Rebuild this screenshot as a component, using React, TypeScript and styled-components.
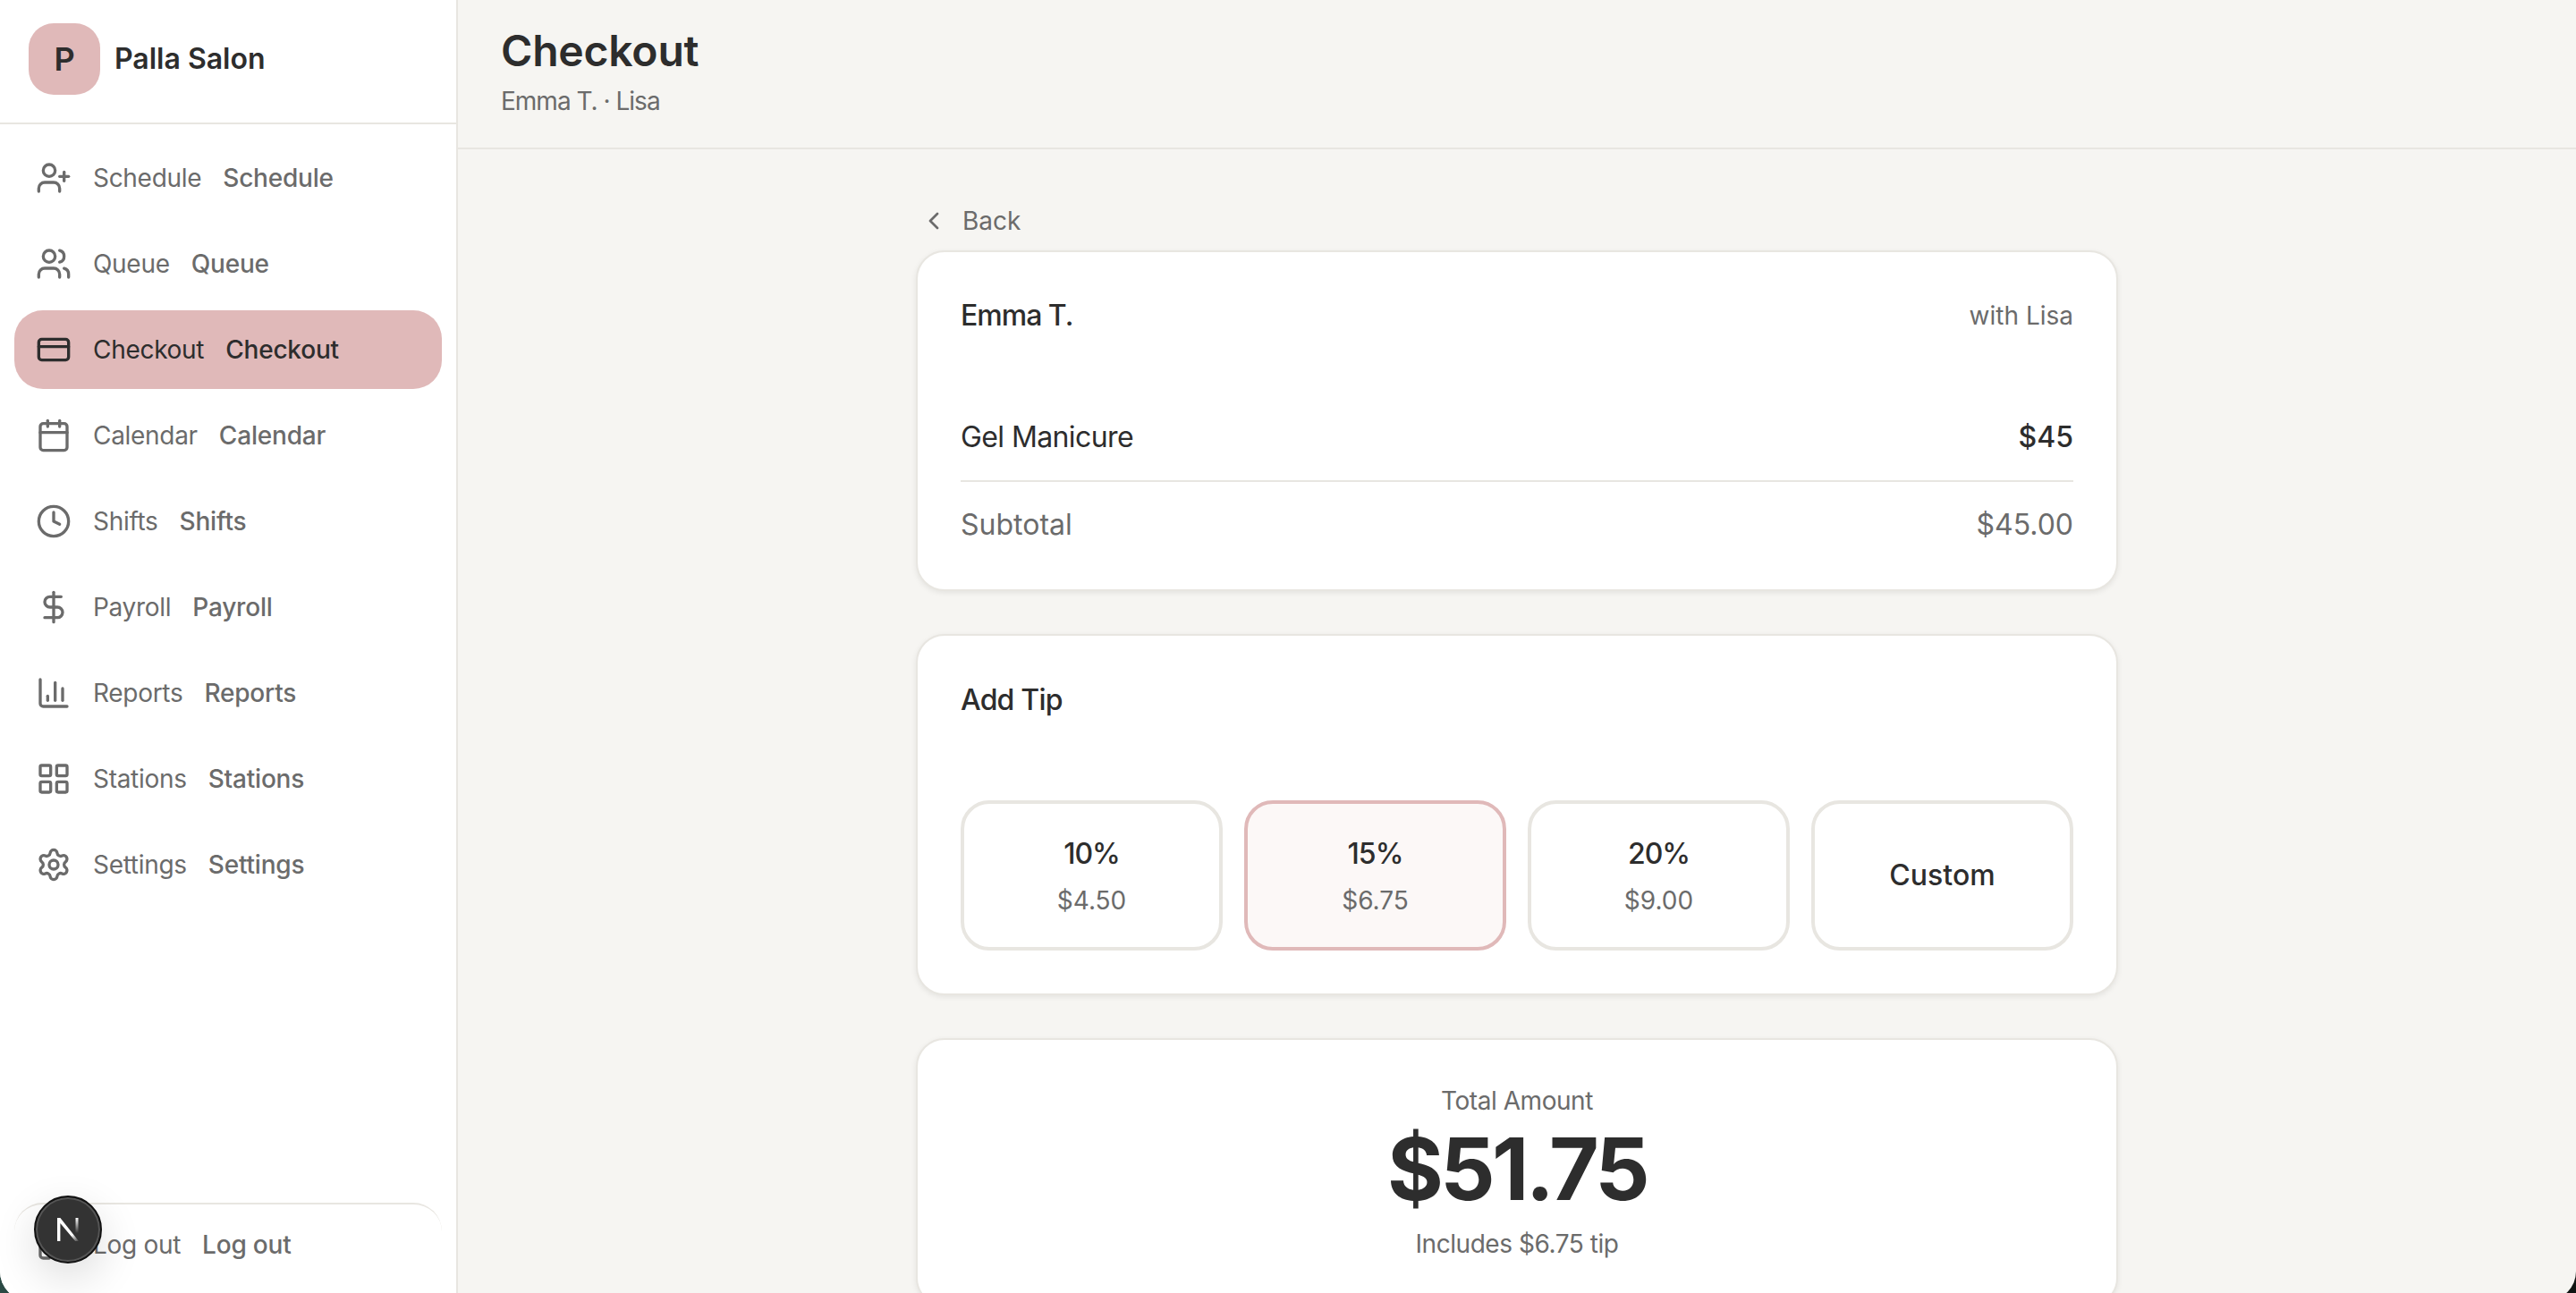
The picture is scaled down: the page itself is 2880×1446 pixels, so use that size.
import { createGlobalStyle, styled } from "styled-components";
import {
  BarChart3,
  Calendar,
  ChevronLeft,
  Clock,
  CreditCard,
  DollarSign,
  LayoutGrid,
  LogOut,
  Settings,
  UserPlus,
  Users,
} from "lucide-react";

const navItems = [
  { label: "Schedule", Icon: UserPlus },
  { label: "Queue", Icon: Users },
  { label: "Checkout", Icon: CreditCard, active: true },
  { label: "Calendar", Icon: Calendar },
  { label: "Shifts", Icon: Clock },
  { label: "Payroll", Icon: DollarSign },
  { label: "Reports", Icon: BarChart3 },
  { label: "Stations", Icon: LayoutGrid },
  { label: "Settings", Icon: Settings },
];

const tips = [
  { pct: "10%", amount: "$4.50" },
  { pct: "15%", amount: "$6.75", selected: true },
  { pct: "20%", amount: "$9.00" },
];

export default function App() {
  return (
    <>
      <GlobalStyle />
      <Frame>
        <Window>
          <Sidebar>
            <Brand>
              <Logo>P</Logo>
              <BrandName>Palla Salon</BrandName>
            </Brand>
            <Nav>
              {navItems.map(({ label, Icon, active }) => (
                <NavItem key={label} $active={active}>
                  <Icon size={40} strokeWidth={2} />
                  <NavLabel>{label}</NavLabel>
                  <NavLabelStrong>{label}</NavLabelStrong>
                </NavItem>
              ))}
            </Nav>
            <LogoutItem>
              <LogOut size={40} strokeWidth={2} />
              <NavLabel>Log out</NavLabel>
              <NavLabelStrong>Log out</NavLabelStrong>
            </LogoutItem>
            <DevBadge>
              <svg width="36" height="36" viewBox="0 0 36 36" fill="none">
                <defs>
                  <linearGradient id="nFade" x1="18" y1="14" x2="30" y2="32" gradientUnits="userSpaceOnUse">
                    <stop offset="0.5" stopColor="#fff" />
                    <stop offset="1" stopColor="#fff" stopOpacity="0" />
                  </linearGradient>
                  <linearGradient id="nBar" x1="28" y1="5" x2="28" y2="22" gradientUnits="userSpaceOnUse">
                    <stop stopColor="#fff" />
                    <stop offset="1" stopColor="#fff" stopOpacity="0" />
                  </linearGradient>
                </defs>
                <path d="M6 5h3.4L30 31h-3.8L9.4 11v20H6z" fill="url(#nFade)" />
                <rect x="26.5" y="5" width="3" height="17" fill="url(#nBar)" />
              </svg>
            </DevBadge>
          </Sidebar>
          <Main>
            <Header>
              <Title>Checkout</Title>
              <Subtitle>Emma T. · Lisa</Subtitle>
            </Header>
            <Content>
              <Column>
                <BackLink>
                  <ChevronLeft size={32} strokeWidth={2} />
                  <span>Back</span>
                </BackLink>
                <Card>
                  <SplitRow>
                    <ClientName>Emma T.</ClientName>
                    <Muted>with Lisa</Muted>
                  </SplitRow>
                  <ServiceRow>
                    <ServiceName>Gel Manicure</ServiceName>
                    <ServicePrice>$45</ServicePrice>
                  </ServiceRow>
                  <SubtotalRow>
                    <span>Subtotal</span>
                    <span>$45.00</span>
                  </SubtotalRow>
                </Card>
                <TipCard>
                  <TipHeading>Add Tip</TipHeading>
                  <TipGrid>
                    {tips.map((tip) => (
                      <TipButton key={tip.pct} $selected={tip.selected}>
                        <TipPct>{tip.pct}</TipPct>
                        <TipAmount>{tip.amount}</TipAmount>
                      </TipButton>
                    ))}
                    <TipButton>
                      <TipCustom>Custom</TipCustom>
                    </TipButton>
                  </TipGrid>
                </TipCard>
                <TotalCard>
                  <TotalNote>Total Amount</TotalNote>
                  <TotalValue>$51.75</TotalValue>
                  <TotalNote>Includes $6.75 tip</TotalNote>
                </TotalCard>
              </Column>
            </Content>
          </Main>
        </Window>
      </Frame>
    </>
  );
}

const GlobalStyle = createGlobalStyle`
  html, body {
    margin: 0;
    height: 100%;
    overflow: hidden;
    background: #111;
  }
  body {
    font-family: Inter, "Liberation Sans", sans-serif;
    color: #2d2d2d;
  }
  * {
    box-sizing: border-box;
  }
`;

const Frame = styled.div`
  height: 1446px;
  width: 2880px;
  overflow: hidden;
  background: linear-gradient(90deg, #2b4a44 0%, #101412 100%);
`;

const Window = styled.div`
  height: 1454px;
  display: flex;
  overflow: hidden;
  background: #f6f5f2;
  border-radius: 0 0 32px 32px;
`;

const Sidebar = styled.aside`
  position: relative;
  width: 512px;
  flex: none;
  display: flex;
  flex-direction: column;
  background: #fff;
  border-right: 2px solid #e8e6e1;
`;

const Brand = styled.div`
  height: 139px;
  flex: none;
  display: flex;
  align-items: center;
  gap: 16px;
  padding: 0 32px 6px;
  border-bottom: 2px solid #e8e6e1;
`;

const Logo = styled.div`
  width: 80px;
  height: 80px;
  border-radius: 28px;
  background: #e0b9b9;
  display: flex;
  align-items: center;
  justify-content: center;
  font-size: 36px;
  font-weight: 600;
`;

const BrandName = styled.div`
  font-size: 32px;
  font-weight: 600;
`;

const Nav = styled.nav`
  flex: 1;
  display: flex;
  flex-direction: column;
  gap: 8px;
  padding: 16px;
`;

const NavItem = styled.div<{ $active?: boolean }>`
  height: 88px;
  display: flex;
  align-items: center;
  padding: 0 24px;
  border-radius: 32px;
  background: ${(p) => (p.$active ? "#e0b9b9" : "transparent")};
  color: ${(p) => (p.$active ? "#2d2d2d" : "#6b6b6b")};

  svg {
    flex: none;
    margin-right: 24px;
  }
`;

const NavLabel = styled.span`
  font-size: 28px;
  letter-spacing: -0.3px;
  margin-right: 24px;
`;

const NavLabelStrong = styled.span`
  font-size: 28px;
  font-weight: 500;
  letter-spacing: -0.2px;
`;

const LogoutItem = styled(NavItem)`
  flex: none;
  height: 92px;
  margin: 0 16px 17px;
  border-top: 2px solid #e8e6e1;
`;

const DevBadge = styled.div`
  position: absolute;
  left: 38px;
  top: 1337px;
  width: 76px;
  height: 76px;
  border-radius: 50%;
  background: #333;
  border: 2px solid #111;
  box-shadow: inset 0 0 0 2px #555, 0 16px 48px rgba(0, 0, 0, 0.14);
  display: flex;
  align-items: center;
  justify-content: center;
`;

const Main = styled.main`
  flex: 1;
  min-width: 0;
  display: flex;
  flex-direction: column;
`;

const Header = styled.header`
  height: 167px;
  flex: none;
  padding: 29px 48px 0;
  border-bottom: 2px solid #e8e6e1;
`;

const Title = styled.h1`
  margin: 0;
  font-size: 48px;
  line-height: 56px;
  font-weight: 600;
  letter-spacing: -0.2px;
`;

const Subtitle = styled.div`
  margin-top: 8px;
  font-size: 28px;
  line-height: 40px;
  letter-spacing: -1px;
  color: #6b6b6b;
`;

const Content = styled.div`
  flex: 1;
  min-height: 0;
  overflow: hidden;
  display: flex;
  justify-content: center;
  padding-top: 60px;
`;

const Column = styled.div`
  width: 1344px;
  display: flex;
  flex-direction: column;
  gap: 48px;
`;

const BackLink = styled.div`
  flex: none;
  display: flex;
  align-items: center;
  gap: 16px;
  height: 40px;
  padding-left: 4px;
  margin-bottom: -35px;
  font-size: 28px;
  color: #6b6b6b;
`;

const Card = styled.section`
  flex: none;
  padding: 47px 48px 48px;
  background: #fff;
  border: 2px solid #e8e6e1;
  border-radius: 32px;
  box-shadow: 0 2px 6px rgba(0, 0, 0, 0.08);
`;

const TipCard = styled(Card)`
  padding-top: 48px;
`;

const SplitRow = styled.div`
  display: flex;
  align-items: center;
  justify-content: space-between;
`;

const ClientName = styled.div`
  font-size: 32px;
  line-height: 48px;
  font-weight: 500;
  letter-spacing: -1px;
`;

const TipHeading = styled(ClientName)`
  letter-spacing: -0.8px;
`;

const Muted = styled.div`
  font-size: 28px;
  line-height: 40px;
  color: #6b6b6b;
`;

const ServiceRow = styled(SplitRow)`
  margin-top: 88px;
  padding-bottom: 24px;
  border-bottom: 2px solid #e8e6e1;
`;

const ServiceName = styled.span`
  font-size: 32px;
  line-height: 48px;
  letter-spacing: -0.6px;
`;

const ServicePrice = styled.span`
  font-size: 32px;
  line-height: 48px;
  font-weight: 500;
`;

const SubtotalRow = styled(SplitRow)`
  padding-top: 24px;
  font-size: 32px;
  line-height: 48px;
  color: #6b6b6b;
`;

const TipGrid = styled.div`
  display: grid;
  grid-template-columns: repeat(4, 1fr);
  gap: 24px;
  margin-top: 88px;
`;

const TipButton = styled.div<{ $selected?: boolean }>`
  height: 168px;
  display: flex;
  flex-direction: column;
  align-items: center;
  justify-content: center;
  gap: 8px;
  border: 4px solid ${(p) => (p.$selected ? "#e0b9b9" : "#e8e6e1")};
  border-radius: 32px;
  background: ${(p) => (p.$selected ? "#fcf8f7" : "#fff")};
`;

const TipCustom = styled.div`
  font-size: 32px;
  line-height: 48px;
  font-weight: 500;
`;

const TipPct = styled(TipCustom)`
  letter-spacing: -1px;
`;

const TipAmount = styled.div`
  font-size: 28px;
  line-height: 40px;
  color: #6b6b6b;
`;

const TotalCard = styled(Card)`
  display: flex;
  flex-direction: column;
  align-items: center;
  padding-top: 48px;
`;

const TotalNote = styled(Muted)`
  letter-spacing: -0.45px;
`;

const TotalValue = styled.div`
  margin: 8px 0 16px;
  font-size: 96px;
  line-height: 96px;
  font-weight: 700;
  letter-spacing: -3.6px;
`;
